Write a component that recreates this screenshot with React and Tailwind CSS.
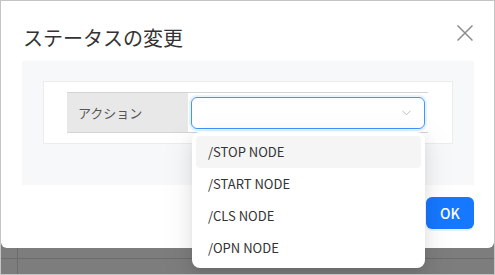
import React from 'react';

const actions = ['/STOP NODE', '/START NODE', '/CLS NODE', '/OPN NODE'];

function CloseIcon() {
    return (
        <svg width="16" height="16" viewBox="0 0 16 16" fill="none" stroke="#8c8c8c" strokeWidth="1.5">
            <path d="M0.5 0.5 L15.5 15.5 M15.5 0.5 L0.5 15.5" />
        </svg>
    );
}

function Chevron() {
    return (
        <svg width="9" height="6" viewBox="0 0 9 6" fill="none" stroke="#bfbfbf" strokeWidth="1">
            <path d="M0.5 0.8 L4.5 4.8 L8.5 0.8" />
        </svg>
    );
}

// dropdown list that opens below the select
function ActionMenu() {
    return (
        <div className="absolute left-[4px] top-[39px] w-[233px] p-1 bg-white rounded-lg shadow-[0_6px_16px_0_rgba(0,0,0,0.08),0_3px_6px_-4px_rgba(0,0,0,0.12),0_9px_28px_8px_rgba(0,0,0,0.05)] z-10">
            {actions.map((a, i) => (
                <div
                    key={a}
                    className={`h-8 flex items-center pl-3 text-[13px] text-[#333] rounded ${i === 0 ? 'bg-[#f5f5f5]' : ''}`}
                >
                    {a}
                </div>
            ))}
        </div>
    );
}

export default function App() {
    return (
        <div
            className="relative w-[495px] h-[275px] overflow-hidden bg-[#7d7d7d] border border-[#c4c4c4]"
            style={{ fontFamily: '"Noto Sans CJK JP", "Noto Sans", sans-serif' }}
        >
            {/* backdrop table lines */}
            <div className="absolute left-0 right-0 top-[257px] h-px bg-[#6c6c6c]" />
            <div className="absolute left-[16px] top-[247px] bottom-0 w-px bg-[#6c6c6c]" />

            <div className="relative w-[493px] h-[247px] bg-white rounded-b-md">
                <div className="flex items-start justify-between pl-[22px] pr-[21px] pt-[23px]">
                    <h2 className="text-[20px] leading-[28px] text-[#333]">ステータスの変更</h2>
                    <div className="mt-[1px]">
                        <CloseIcon />
                    </div>
                </div>

                <div className="mt-[9px] ml-[21px] w-[452px] h-[124px] bg-[#f7f8fa] pt-5 pl-[21px]">
                    <div className="w-[410px] bg-white border border-[#ececec] pt-[10px] pb-[10px] pl-[23px]">
                        <div className="w-[361px] flex border-y border-[#d4d4d4]">
                            <div className="w-[121px] h-[39px] bg-[#e8e8e8] flex items-center pl-[11px] text-[13px] text-[#555]">
                                アクション
                            </div>
                            <div className="relative flex-1 pt-[4px] pl-[3px] pr-[3px]">
                                <div className="h-[32px] w-[234px] rounded-md border-[1.5px] border-[#4096ff] shadow-[0_0_0_2px_rgba(5,145,255,0.1)] flex items-center justify-end pr-[13px]">
                                    <Chevron />
                                </div>
                                <ActionMenu />
                            </div>
                        </div>
                    </div>
                </div>

                <div className="flex justify-end pr-[20px] mt-3">
                    <button className="w-12 h-8 rounded-md bg-[#1677ff] text-white text-[14px] font-medium shadow-[0_2px_0_rgba(5,145,255,0.1)]">
                        OK
                    </button>
                </div>
            </div>
        </div>
    );
}
